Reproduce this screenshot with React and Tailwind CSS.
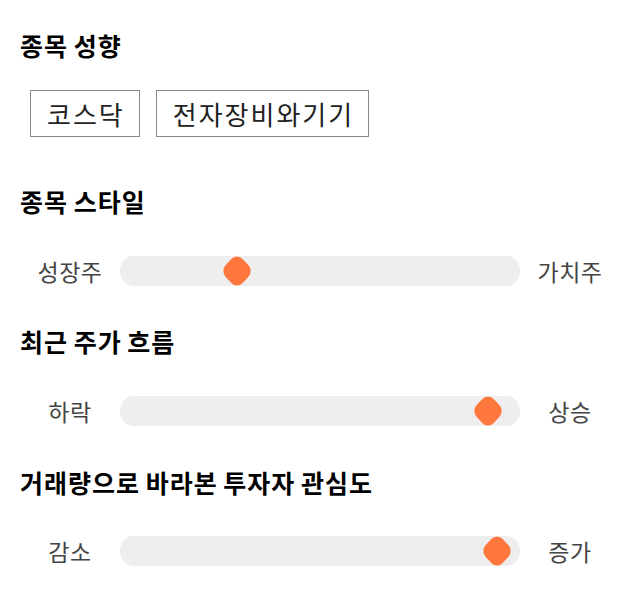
const sliders = [
  { title: "종목 스타일", left: "성장주", right: "가치주", center: 237 },
  { title: "최근 주가 흐름", left: "하락", right: "상승", center: 488 },
  { title: "거래량으로 바라본 투자자 관심도", left: "감소", right: "증가", center: 497 },
];

function Slider({ left, right, center }) {
  const trackStart = 120;
  const offset = center - trackStart - 14;
  return (
    <div className="flex items-center h-[30px]">
      <div className="w-[100px] text-center text-[23px] tracking-[0.5px] leading-[30px] text-[#444444]">{left}</div>
      <div className="relative flex-1 h-[30px] bg-[#eeeeee] rounded-[13px/15px]">
        <div className="absolute top-0 h-[30px] w-[28px] flex items-center justify-center" style={{ left: offset }}>
          <div className="w-[24px] h-[24px] rounded-[8px] bg-[#ff773d] [transform:scaleY(1.07)_rotate(45deg)]" />
        </div>
      </div>
      <div className="w-[100px] text-center text-[23px] tracking-[0.5px] leading-[30px] text-[#444444]">{right}</div>
    </div>
  );
}

const headingCls = "h-[40px] flex items-center text-[25px] tracking-[1px] [word-spacing:-1px] font-bold text-black";
const btnCls = "h-[47px] pl-[16px] pr-[14px] border border-[#888888] flex items-center text-[26px] tracking-[2px] text-[#222222]";

export default function App() {
  return (
    <div className="w-[640px] h-[606px] bg-white px-[20px] pt-[26px] font-['Noto_Sans_CJK_KR','Noto_Sans',sans-serif]">
      <div className={headingCls}>종목 성향</div>
      <div className="mt-[24px] flex gap-[16px] pl-[10px]">
        <div className={btnCls}>코스닥</div>
        <div className={btnCls}>전자장비와기기</div>
      </div>
      <div className={"mt-[45px] " + headingCls}>{sliders[0].title}</div>
      <div className="mt-[34px]"><Slider {...sliders[0]} /></div>
      <div className={"mt-[36px] " + headingCls}>{sliders[1].title}</div>
      <div className="mt-[34px]"><Slider {...sliders[1]} /></div>
      <div className={"mt-[37px] " + headingCls}>{sliders[2].title}</div>
      <div className="mt-[33px]"><Slider {...sliders[2]} /></div>
    </div>
  );
}
